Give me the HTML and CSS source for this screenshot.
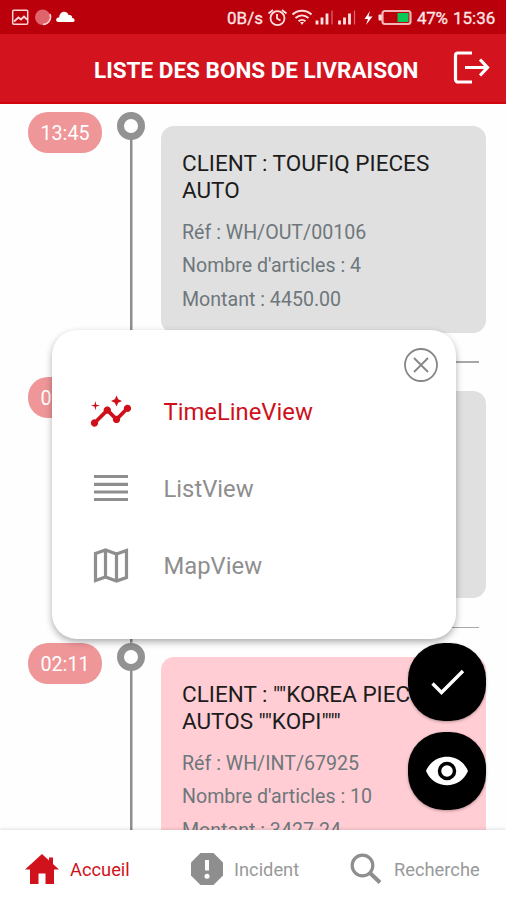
FILE: index.html
```html
<!DOCTYPE html>
<html lang="fr">
<head>
    <meta charset="UTF-8">
    <meta name="viewport" content="width=device-width, initial-scale=1.0">
    <title>Liste des bons de livraison</title>
    <link rel="stylesheet" href="styles.css">
</head>
<body>
    <div class="status-bar">
        <svg class="status-left" width="80" height="34" viewBox="0 0 80 34">
            <rect x="12.700" y="10.200" width="15" height="14" rx="1" fill="none" stroke="#ffd6d6" stroke-width="1.500"/>
            <path d="M14 21.500l4.500-4 2.500 2 3-3 3 3" fill="none" stroke="#ffd6d6" stroke-width="1.800"/>
            <circle cx="42.700" cy="17.200" r="7.700" fill="#e0646c"/>
            <path d="M50 14a7.700 7.700 0 0 1-7 10.500" fill="none" stroke="#ffd6d6" stroke-width="1.500"/>
            <path d="M58.500 22c-3.500 0-3-4.500.8-4.700 0-6.300 7.500-7.500 9.200-2.300 3-.5 3.800 1.500 3.700 3 3.200.3 3 4 1 4z" fill="#fff"/>
        </svg>
        <div class="status-right">
            <span class="speed">0B/s</span>
            <svg width="112" height="34" viewBox="266 0 112 34" fill="none" stroke="#ffe0e0">
                <circle cx="277.500" cy="18.200" r="7" stroke-width="1.800"/>
                <path d="M277 14v4.500l3.500 2M268.500 13.500l4.500-3.500M286.500 13.500l-4.500-3.500" stroke-width="1.800"/>
                <path d="M292.500 14.500c5.500-5 13.500-5 19 0M295.500 18c4-3.500 9-3.500 13 0M298.500 21.300c2-1.800 5-1.800 7 0" stroke-width="2"/>
                <path d="M300 22h4l-2 3z" fill="#ffe0e0" stroke="none"/>
                <path d="M317 20.500v4M322 17.500v7M327 13.500v11M339.500 20.500v4M344.500 17.500v7M349.500 13.500v11" stroke-width="2.800"/>
                <path d="M332 10.500v14M354.500 10.500v14" stroke="#d8666c" stroke-width="1.300"/>
                <path d="M370 11l-5.500 8h3.500l-2 6 6.500-8.500h-4z" fill="#fff" stroke="none"/>
            </svg>
            <svg class="battery" width="34" height="34" viewBox="378 0 34 34">
                <rect x="378.500" y="14.500" width="4" height="6" rx="1" fill="#ffe0e0"/>
                <rect x="382.500" y="11" width="28" height="13" rx="2.500" fill="none" stroke="#f3b5b5" stroke-width="2.200"/>
                <rect x="397.500" y="13" width="11" height="9" fill="#0bc956"/>
            </svg>
            <span class="percent">47%</span>
            <span class="clock">15:36</span>
        </div>
    </div>

    <header class="header">
        <h1>LISTE DES BONS DE LIVRAISON</h1>
        <svg class="logout" width="38" height="36" viewBox="452 52 38 36" fill="none" stroke="#fff" stroke-width="3.200">
            <path d="M472 55h-14a2.500 2.500 0 0 0-2.500 2.500v24a2.500 2.500 0 0 0 2.500 2.500h14M465 69.500h22M480 61.500l7.500 8-7.500 8"/>
        </svg>
    </header>

    <main class="timeline">
        <div class="item">
            <span class="time">13:45</span>
            <div class="track"><span class="dot"></span></div>
            <div class="content">
                <div class="card">
                    <h2>CLIENT : TOUFIQ PIECES AUTO</h2>
                    <p>Réf : WH/OUT/00106</p>
                    <p>Nombre d'articles : 4</p>
                    <p>Montant : 4450.00</p>
                </div>
                <hr>
            </div>
        </div>
        <div class="item">
            <span class="time">02:11</span>
            <div class="track"><span class="dot"></span></div>
            <div class="content">
                <div class="card"></div>
                <hr>
            </div>
        </div>
        <div class="item">
            <span class="time">02:11</span>
            <div class="track"><span class="dot"></span></div>
            <div class="content">
                <div class="card late">
                    <h2>CLIENT : ""KOREA PIECES AUTOS ""KOPI"""</h2>
                    <p>Réf : WH/INT/67925</p>
                    <p>Nombre d'articles : 10</p>
                    <p>Montant : 3427.24</p>
                </div>
                <hr>
            </div>
        </div>
    </main>

    <div class="fabs">
        <button class="fab" aria-label="Valider">
            <svg width="78" height="78" viewBox="408 643 78 78" fill="none" stroke="#fff" stroke-width="3.400">
                <path d="M432.500 683.500l9 9 21.500-21.500"/>
            </svg>
        </button>
        <button class="fab" aria-label="Voir">
            <svg width="78" height="78" viewBox="408 731.500 78 78">
                <path d="M426 770.500c8-19 34-19 42 0-8 19-34 19-42 0z" fill="#fff"/>
                <circle cx="447" cy="770.500" r="7.500" fill="#fff" stroke="#000" stroke-width="3.500"/>
            </svg>
        </button>
    </div>

    <div class="popup">
        <button class="close" aria-label="Fermer">
            <svg width="36" height="36" viewBox="0 0 36 36" fill="none" stroke="#868686" stroke-width="1.800">
                <circle cx="18" cy="18" r="16"/>
                <path d="M11 11l14 14M25 11l-14 14"/>
            </svg>
        </button>
        <ul class="views">
            <li class="active">
                <svg width="44" height="44" viewBox="0 0 24 24" fill="currentColor">
                    <path d="M21 8c-1.450 0-2.260 1.440-1.930 2.510l-3.550 3.560c-.3-.09-.74-.09-1.040 0l-2.550-2.550C12.270 10.450 11.460 9 10 9c-1.450 0-2.270 1.440-1.930 2.520l-4.560 4.550C2.440 15.740 1 16.550 1 18c0 1.100.9 2 2 2 1.450 0 2.260-1.440 1.930-2.510l4.550-4.560c.3.09.74.09 1.040 0l2.550 2.550C12.730 16.550 13.540 18 15 18c1.450 0 2.270-1.440 1.930-2.520l3.560-3.550C21.560 12.260 23 11.450 23 10c0-1.100-.9-2-2-2z"/>
                    <path d="M15 9l.94-2.070L18 6l-2.060-.93L15 3l-.92 2.070L12 6l2.080.93zM3.500 11L4 9l2-.5L4 8l-.5-2L3 8l-2 .5L3 9z"/>
                </svg>
                <span>TimeLineView</span>
            </li>
            <li>
                <svg width="44" height="44" viewBox="0 0 44 44" stroke="currentColor" stroke-width="3.200">
                    <path d="M5 9.500h34M5 17.300h34M5 25h34M5 32.500h34"/>
                </svg>
                <span>ListView</span>
            </li>
            <li>
                <svg width="44" height="44" viewBox="0 0 44 44" fill="none" stroke="currentColor" stroke-width="3.200">
                    <path d="M6.500 9.500L16.500 6l11 4 10-3.500v27L27.500 37l-11-4-10 3.500zM16.500 6v27M27.500 10v27"/>
                </svg>
                <span>MapView</span>
            </li>
        </ul>
    </div>

    <nav class="tabs">
        <a class="tab home active">
            <svg width="34" height="32" viewBox="0 0 34 32" fill="currentColor">
                <path d="M17 1l7 6.500V4.500h4V11l6 5.500h-5V31h-8.500V20.500h-7V31H5V16.500H0z"/>
            </svg>
            <span>Accueil</span>
        </a>
        <a class="tab incident">
            <svg width="32" height="32" viewBox="0 0 32 32">
                <path d="M9.500 0h13L32 9.500v13L22.500 32h-13L0 22.500v-13z" fill="#8e8e8e"/>
                <path d="M16 7v10.500" stroke="#fff" stroke-width="4"/>
                <circle cx="16" cy="23.300" r="2.500" fill="#fff"/>
            </svg>
            <span>Incident</span>
        </a>
        <a class="tab search">
            <svg width="32" height="32" viewBox="0 0 32 32" fill="none" stroke="#8e8e8e">
                <circle cx="12.500" cy="12.500" r="10.300" stroke-width="3.200"/>
                <path d="M19.500 19.500l10.500 10" stroke-width="4"/>
            </svg>
            <span>Recherche</span>
        </a>
    </nav>
</body>
</html>
```
FILE: styles.css
```css
* {
    box-sizing: border-box;
}

body {
    font-family: Roboto, "Liberation Sans", sans-serif;
    background-color: #fefefe;
    display: flex;
    flex-direction: column;
    height: 900px;
    margin: 0;
    overflow: hidden;
    position: relative;
}

svg {
    display: block;
    flex: none;
}

button {
    border: none;
    padding: 0;
    cursor: pointer;
}

.status-bar {
    display: flex;
    justify-content: space-between;
    flex: none;
    height: 34px;
    padding-right: 11px;
    background-color: #b9000b;
    color: #ffe6e6;
    font-size: 17px;
    line-height: 36px;
    -webkit-text-stroke: 0.3px #ffe6e6;
}

.status-right {
    display: flex;
    white-space: nowrap;
}

.speed {
    width: 39px;
}

.percent {
    width: 36px;
    margin-left: 5px;
    letter-spacing: -0.3px;
}

.clock {
    width: 42px;
    text-align: right;
}

.header {
    display: flex;
    align-items: center;
    flex: none;
    height: 70px;
    padding: 0 16px 0 94px;
    background-color: #d3141f;
    border-bottom: 2px solid #d0050e;
    color: #fff;
}

.header h1 {
    width: 358px;
    margin: 3px 0 0;
    font-size: 22.5px;
    white-space: nowrap;
}

.timeline {
    flex: 1;
    min-height: 0;
    overflow: hidden;
    padding-top: 7.5px;
}

.item {
    display: flex;
    height: 265.5px;
    padding-left: 28px;
}

.time {
    width: 74px;
    height: 41px;
    border-radius: 20px;
    background-color: #ef9699;
    color: #fff;
    font-size: 19.7px;
    line-height: 43px;
    text-align: center;
}

.track {
    width: 28px;
    margin: 0 16px 0 15px;
    background: linear-gradient(#8e8e8e, #8e8e8e) center / 2.5px 100% no-repeat;
}

.dot {
    display: block;
    width: 28px;
    height: 28px;
    border: 7px solid #929292;
    border-radius: 50%;
    background-color: #fff;
}

.content {
    width: 325px;
    padding-top: 14px;
}

.card {
    height: 207px;
    padding: 24.5px 0 0 21px;
    border-radius: 13px;
    background-color: #e0e0e0;
}

.card.late {
    background-color: #ffcdd3;
}

.card h2 {
    width: 290px;
    margin: 0 0 12.5px;
    color: #1c1c1c;
    font-size: 22.5px;
    font-weight: normal;
    line-height: 26.5px;
}

.card p {
    margin: 0;
    color: #6e777b;
    font-size: 19.6px;
    line-height: 33.7px;
}

hr {
    height: 1.5px;
    margin: 28.5px 7px 0 0;
    border: none;
    background-color: #a8a8a8;
}

.fabs {
    position: absolute;
    top: 643px;
    left: 408px;
    display: flex;
    flex-direction: column;
    gap: 10.5px;
}

.fab {
    width: 78px;
    height: 78px;
    border-radius: 36px;
    background-color: #000;
    box-shadow: 0 1px 3px rgba(0, 0, 0, 0.3);
}

.popup {
    position: absolute;
    top: 329.5px;
    left: 51.5px;
    display: flex;
    flex-direction: column;
    width: 404.5px;
    height: 309px;
    padding: 17px 17px 0 37px;
    border-radius: 25px;
    background-color: #fff;
    box-shadow: 0 3px 7px rgba(0, 0, 0, 0.32);
}

.close {
    align-self: flex-end;
    background: none;
}

.views {
    margin: 7px 0 0;
    padding: 0;
    list-style: none;
}

.views li {
    display: flex;
    align-items: center;
    gap: 31px;
    height: 77.3px;
    padding-bottom: 33px;
    color: #8e8e8e;
    font-size: 23.8px;
}

.views li.active {
    color: #cf101b;
}

.tabs {
    display: flex;
    flex: none;
    height: 70px;
    padding: 7px 0 0 25px;
    background-color: #fff;
    box-shadow: 0 -1px 3px rgba(0, 0, 0, 0.12);
    color: #999;
    font-size: 18.3px;
}

.tab {
    display: flex;
    align-items: center;
    gap: 11px;
}

.tab span {
    margin-top: 2px;
}

.tab.active {
    color: #d0121c;
}

.tab.home {
    width: 166px;
}

.tab.incident {
    width: 159px;
}

.tab.search {
    gap: 12px;
}
```
